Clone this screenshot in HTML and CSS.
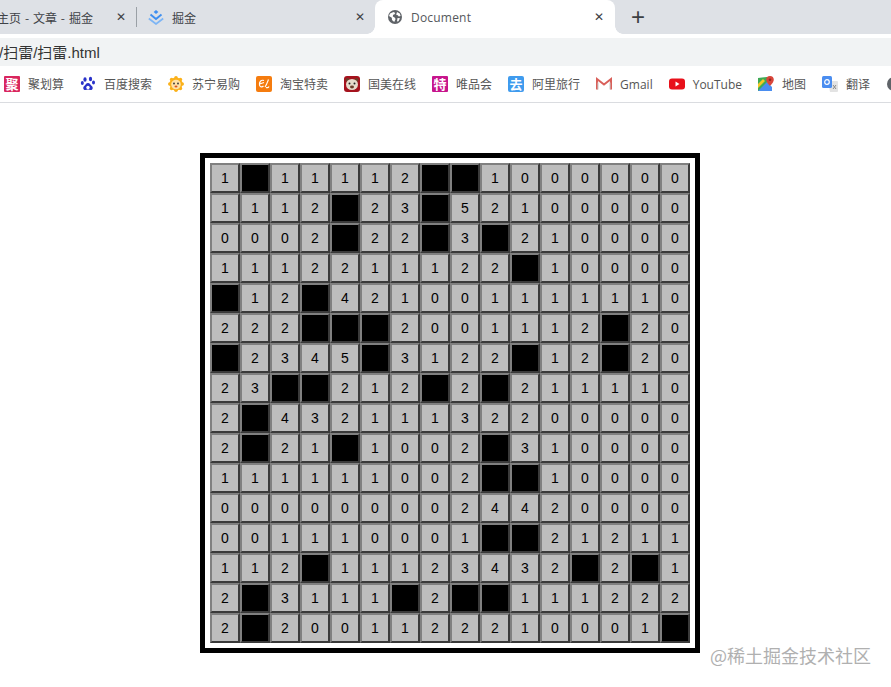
FILE: index.html
```html
<!DOCTYPE html>
<html lang="zh">
<head>
<meta charset="utf-8">
<title>Document</title>
<link rel="stylesheet" href="styles.css">
</head>
<body>
<header class="chrome">
  <div class="tabs">
    <div class="tab tab-first"><span class="tab-title">主页 - 文章 - 掘金</span><span class="close">✕</span></div>
    <div class="sep"></div>
    <div class="tab tab-second">
      <svg class="fav" viewBox="0 0 16 16"><path d="M8 1l2.400 2L8 5 5.600 3z" fill="#3f8ff0"/><path d="M2.500 5.500L8 10l5.500-4.500" fill="none" stroke="#3f8ff0" stroke-width="1.900"/><path d="M.8 9.500L8 15l7.200-5.500" fill="none" stroke="#7db5f5" stroke-width="1.700"/></svg>
      <span class="tab-title">掘金</span><span class="close">✕</span>
    </div>
    <div class="tab tab-active">
      <svg class="fav" viewBox="0 0 16 16"><circle cx="8" cy="8" r="7" fill="#5f6368"/><path d="M3 4.500l3.500-1.500 1.800 1-1 1.600-1.200.2-.3 1.600 1.800 1 1 1.500-1.400 3L5 11l-.2-2.200L2 7zM10 3l2.800 1.600.8 2.400-1.800.5-1-1.300-1.600-.5zM10.500 9l2.500.2-1.500 3-1.500.4z" fill="#fff"/></svg>
      <span class="tab-title">Document</span><span class="close">✕</span>
    </div>
    <span class="plus">+</span>
  </div>
  <div class="address"><span class="url">/扫雷/扫雷.html</span></div>
  <nav class="bookmarks">
    <a class="bm"><span class="ico ico-ju">聚</span>聚划算</a>
    <a class="bm"><svg class="ico-s" viewBox="0 0 16 16"><g fill="#2932c9"><ellipse cx="5" cy="3.500" rx="1.600" ry="2.200"/><ellipse cx="10.500" cy="3" rx="1.600" ry="2.200"/><ellipse cx="2.300" cy="7" rx="1.500" ry="2"/><ellipse cx="13.500" cy="6.500" rx="1.500" ry="2"/><path d="M8 7c2 0 2.500 2 4 3.200 1.500 1.500.5 4-1.500 3.800-1-.1-1.700-.4-2.500-.4s-1.500.4-2.500.4c-2 .2-3-2.300-1.500-3.800C5.500 9 6 7 8 7z"/></g><circle cx="8" cy="11.500" r="1.700" fill="#fff"/></svg>百度搜索</a>
    <a class="bm"><svg class="ico-s" viewBox="0 0 16 16"><circle cx="8" cy="8" r="6.500" fill="#fbb11a"/><g fill="#fbb11a"><circle cx="8" cy="1.800" r="1.800"/><circle cx="8" cy="14.200" r="1.800"/><circle cx="1.800" cy="8" r="1.800"/><circle cx="14.200" cy="8" r="1.800"/><circle cx="3.600" cy="3.600" r="1.800"/><circle cx="12.400" cy="3.600" r="1.800"/><circle cx="3.600" cy="12.400" r="1.800"/><circle cx="12.400" cy="12.400" r="1.800"/></g><circle cx="8" cy="8.500" r="4.800" fill="#ffe2a8"/><circle cx="6" cy="7.500" r=".9" fill="#333"/><circle cx="10" cy="7.500" r=".9" fill="#333"/><ellipse cx="8" cy="10.500" rx="1.500" ry="1" fill="#d9541e"/></svg>苏宁易购</a>
    <a class="bm"><svg class="ico-s" viewBox="0 0 16 16"><rect width="16" height="16" rx="2" fill="#f57c0f"/><path d="M8 4.500C5 3.500 3 6 3.500 9c.3 2 2.500 2.500 4 1M3.500 8L8 6.500M9 11c1.500-2 2.500-5 3.500-7.500M10 11.500c1 .3 2.500 0 3-1" fill="none" stroke="#fff" stroke-width="1.200"/></svg>淘宝特卖</a>
    <a class="bm"><svg class="ico-s" viewBox="0 0 16 16"><rect width="16" height="16" rx="3" fill="#a5121d"/><circle cx="3.500" cy="4" r="2" fill="#6b3d2a"/><circle cx="12.500" cy="4" r="2" fill="#6b3d2a"/><ellipse cx="8" cy="8.500" rx="6" ry="5.500" fill="#e6dccb"/><circle cx="5.500" cy="7.500" r="1" fill="#222"/><circle cx="10.500" cy="7.500" r="1" fill="#222"/><ellipse cx="8" cy="11" rx="2" ry="1.400" fill="#6b3d2a"/></svg>国美在线</a>
    <a class="bm"><span class="ico ico-te">特</span>唯品会</a>
    <a class="bm"><span class="ico ico-qu">去</span>阿里旅行</a>
    <a class="bm"><svg class="ico-s" viewBox="0 0 16 16"><path d="M1 13.500V3l7 5.500L15 3v10.500" fill="none" stroke="#d9605a" stroke-width="2"/><path d="M2 13.500V6.500M14 13.500V6.500" stroke="#c9c9c9" stroke-width="1"/></svg>Gmail</a>
    <a class="bm"><svg class="ico-s" viewBox="0 0 16 16"><rect y="2.500" width="16" height="11" rx="3" fill="#e8101a"/><path d="M6.500 5.500v5l4-2.500z" fill="#fff"/></svg>YouTube</a>
    <a class="bm"><svg class="ico-s" viewBox="0 0 16 16"><path d="M0 2l9-1v14H0z" fill="#3eaa55"/><path d="M0 15L9 6l5 5v4z" fill="#4a8df0"/><path d="M0 8l5-5 2 2-7 7z" fill="#f7c924"/><path d="M12 0a3.800 3.800 0 0 1 3.800 3.800C15.800 6.500 12 10 12 10S8.200 6.500 8.200 3.800A3.800 3.800 0 0 1 12 0z" fill="#d9453a"/><circle cx="12" cy="3.800" r="1.300" fill="#8f2a23"/></svg>地图</a>
    <a class="bm"><svg class="ico-s" viewBox="0 0 16 16"><path d="M6 5h9a1 1 0 0 1 1 1v9a1 1 0 0 1-1 1H8z" fill="#e3e3e3"/><rect width="10" height="12" rx="1.500" fill="#4a8df0"/><circle cx="5" cy="6" r="2.300" fill="none" stroke="#fff" stroke-width="1.200"/><path d="M11 9l3 4M14 9l-3 4" stroke="#8a8a8a" stroke-width="1"/></svg>翻译</a>
    <svg class="ico-s" viewBox="0 0 16 16"><circle cx="8" cy="8" r="7" fill="#5f6368"/></svg>
  </nav>
</header>
<main class="board">
  <div class="c">1</div><div class="c m"></div><div class="c">1</div><div class="c">1</div><div class="c">1</div><div class="c">1</div><div class="c">2</div><div class="c m"></div><div class="c m"></div><div class="c">1</div><div class="c">0</div><div class="c">0</div><div class="c">0</div><div class="c">0</div><div class="c">0</div><div class="c">0</div>
  <div class="c">1</div><div class="c">1</div><div class="c">1</div><div class="c">2</div><div class="c m"></div><div class="c">2</div><div class="c">3</div><div class="c m"></div><div class="c">5</div><div class="c">2</div><div class="c">1</div><div class="c">0</div><div class="c">0</div><div class="c">0</div><div class="c">0</div><div class="c">0</div>
  <div class="c">0</div><div class="c">0</div><div class="c">0</div><div class="c">2</div><div class="c m"></div><div class="c">2</div><div class="c">2</div><div class="c m"></div><div class="c">3</div><div class="c m"></div><div class="c">2</div><div class="c">1</div><div class="c">0</div><div class="c">0</div><div class="c">0</div><div class="c">0</div>
  <div class="c">1</div><div class="c">1</div><div class="c">1</div><div class="c">2</div><div class="c">2</div><div class="c">1</div><div class="c">1</div><div class="c">1</div><div class="c">2</div><div class="c">2</div><div class="c m"></div><div class="c">1</div><div class="c">0</div><div class="c">0</div><div class="c">0</div><div class="c">0</div>
  <div class="c m"></div><div class="c">1</div><div class="c">2</div><div class="c m"></div><div class="c">4</div><div class="c">2</div><div class="c">1</div><div class="c">0</div><div class="c">0</div><div class="c">1</div><div class="c">1</div><div class="c">1</div><div class="c">1</div><div class="c">1</div><div class="c">1</div><div class="c">0</div>
  <div class="c">2</div><div class="c">2</div><div class="c">2</div><div class="c m"></div><div class="c m"></div><div class="c m"></div><div class="c">2</div><div class="c">0</div><div class="c">0</div><div class="c">1</div><div class="c">1</div><div class="c">1</div><div class="c">2</div><div class="c m"></div><div class="c">2</div><div class="c">0</div>
  <div class="c m"></div><div class="c">2</div><div class="c">3</div><div class="c">4</div><div class="c">5</div><div class="c m"></div><div class="c">3</div><div class="c">1</div><div class="c">2</div><div class="c">2</div><div class="c m"></div><div class="c">1</div><div class="c">2</div><div class="c m"></div><div class="c">2</div><div class="c">0</div>
  <div class="c">2</div><div class="c">3</div><div class="c m"></div><div class="c m"></div><div class="c">2</div><div class="c">1</div><div class="c">2</div><div class="c m"></div><div class="c">2</div><div class="c m"></div><div class="c">2</div><div class="c">1</div><div class="c">1</div><div class="c">1</div><div class="c">1</div><div class="c">0</div>
  <div class="c">2</div><div class="c m"></div><div class="c">4</div><div class="c">3</div><div class="c">2</div><div class="c">1</div><div class="c">1</div><div class="c">1</div><div class="c">3</div><div class="c">2</div><div class="c">2</div><div class="c">0</div><div class="c">0</div><div class="c">0</div><div class="c">0</div><div class="c">0</div>
  <div class="c">2</div><div class="c m"></div><div class="c">2</div><div class="c">1</div><div class="c m"></div><div class="c">1</div><div class="c">0</div><div class="c">0</div><div class="c">2</div><div class="c m"></div><div class="c">3</div><div class="c">1</div><div class="c">0</div><div class="c">0</div><div class="c">0</div><div class="c">0</div>
  <div class="c">1</div><div class="c">1</div><div class="c">1</div><div class="c">1</div><div class="c">1</div><div class="c">1</div><div class="c">0</div><div class="c">0</div><div class="c">2</div><div class="c m"></div><div class="c m"></div><div class="c">1</div><div class="c">0</div><div class="c">0</div><div class="c">0</div><div class="c">0</div>
  <div class="c">0</div><div class="c">0</div><div class="c">0</div><div class="c">0</div><div class="c">0</div><div class="c">0</div><div class="c">0</div><div class="c">0</div><div class="c">2</div><div class="c">4</div><div class="c">4</div><div class="c">2</div><div class="c">0</div><div class="c">0</div><div class="c">0</div><div class="c">0</div>
  <div class="c">0</div><div class="c">0</div><div class="c">1</div><div class="c">1</div><div class="c">1</div><div class="c">0</div><div class="c">0</div><div class="c">0</div><div class="c">1</div><div class="c m"></div><div class="c m"></div><div class="c">2</div><div class="c">1</div><div class="c">2</div><div class="c">1</div><div class="c">1</div>
  <div class="c">1</div><div class="c">1</div><div class="c">2</div><div class="c m"></div><div class="c">1</div><div class="c">1</div><div class="c">1</div><div class="c">2</div><div class="c">3</div><div class="c">4</div><div class="c">3</div><div class="c">2</div><div class="c m"></div><div class="c">2</div><div class="c m"></div><div class="c">1</div>
  <div class="c">2</div><div class="c m"></div><div class="c">3</div><div class="c">1</div><div class="c">1</div><div class="c">1</div><div class="c m"></div><div class="c">2</div><div class="c m"></div><div class="c m"></div><div class="c">1</div><div class="c">1</div><div class="c">1</div><div class="c">2</div><div class="c">2</div><div class="c">2</div>
  <div class="c">2</div><div class="c m"></div><div class="c">2</div><div class="c">0</div><div class="c">0</div><div class="c">1</div><div class="c">1</div><div class="c">2</div><div class="c">2</div><div class="c">2</div><div class="c">1</div><div class="c">0</div><div class="c">0</div><div class="c">0</div><div class="c">1</div><div class="c m"></div>
</main>
<div class="watermark">@稀土掘金技术社区</div>
</body>
</html>
```

FILE: styles.css
```css
* { box-sizing: border-box; }
html, body { margin: 0; height: 100%; overflow: hidden; background: #fff; }
body { font-family: "Noto Sans CJK SC", "Liberation Sans", sans-serif; position: relative; }

.chrome { height: 103px; border-bottom: 1px solid #dadce0; display: flex; flex-direction: column; }

.tabs { height: 34px; background: #dee1e6; display: flex; align-items: center; }
.tab { display: flex; align-items: center; height: 34px; font-size: 12px; color: #3f4247; }
.tab-first { width: 139px; margin-left: -3px; flex: none; justify-content: space-between; padding-right: 9px; word-spacing: 1.2px; }
.sep { width: 1px; height: 20px; background: #9aa0a6; flex: none; }
.tab-second { width: 238px; flex: none; padding-left: 11px; padding-right: 9px; }
.tab-second .fav { margin-right: 8px; }
.tab-second .close { margin-left: auto; }
.tab-active { position: relative; width: 240px; flex: none; background: #fff; border-radius: 8px 8px 0 0; padding-left: 12px; padding-right: 10px; }
.tab-active::before, .tab-active::after { content: ""; position: absolute; bottom: 0; width: 8px; height: 8px; }
.tab-active::before { left: -8px; background: radial-gradient(circle at 0 0, #dee1e6 7.500px, #fff 8px); }
.tab-active::after { right: -8px; background: radial-gradient(circle at 100% 0, #dee1e6 7.500px, #fff 8px); }
.tab-active .fav { margin-right: 8px; }
.tab-active .close { margin-left: auto; }
.tab-active .tab-title { font-family: "Open Sans", "Liberation Sans", sans-serif; color: #54575c; letter-spacing: .2px; }
.fav { width: 16px; height: 16px; flex: none; }
.close { font-size: 12px; color: #3c4043; font-family: "DejaVu Sans", sans-serif; font-weight: 700; width: 12px; text-align: center; }
.plus { margin-left: 16px; font-size: 24px; line-height: 34px; color: #3c4043; font-family: "Liberation Sans", sans-serif; }

.address { margin-top: 4px; height: 28px; padding-bottom: 2px; background: #f1f3f4; display: flex; align-items: center; font-size: 15px; color: #333; font-family: "Liberation Sans", "Noto Sans CJK SC", sans-serif; }
.url { margin-left: -1px; }

.bookmarks { flex: 1; display: flex; align-items: center; gap: 16px; padding-left: 4px; white-space: nowrap; overflow: hidden; }
.bm { display: flex; align-items: center; gap: 8px; font-size: 12px; color: #555; font-family: "Open Sans", "Noto Sans CJK SC", sans-serif; }
.ico, .ico-s { width: 16px; height: 16px; flex: none; }
.ico { display: flex; align-items: center; justify-content: center; border-radius: 1px; color: #fff; font-size: 13px; font-weight: 700; line-height: 16px; }
.ico-ju { background: #d9265e; }
.ico-te { background: #c7158c; }
.ico-qu { background: #3f9bee; border-radius: 2px; }

.board { width: 500px; height: 500px; margin: 50px 0 0 200px; border: 5px solid #000; padding: 5px; background: #fff; display: grid; grid-template-columns: repeat(16, 30px); grid-auto-rows: 30px; }
.c { background: #bdbdbd; border: 2px solid; border-color: #808080 #3a3a3a #3a3a3a #808080; display: flex; align-items: center; justify-content: center; font: 14px "Liberation Sans", sans-serif; color: #000; }
.m { background: #000; }

.watermark { position: absolute; left: 710px; top: 643px; font-size: 18px; line-height: 24px; color: #b0b0b0; white-space: nowrap; }
```
